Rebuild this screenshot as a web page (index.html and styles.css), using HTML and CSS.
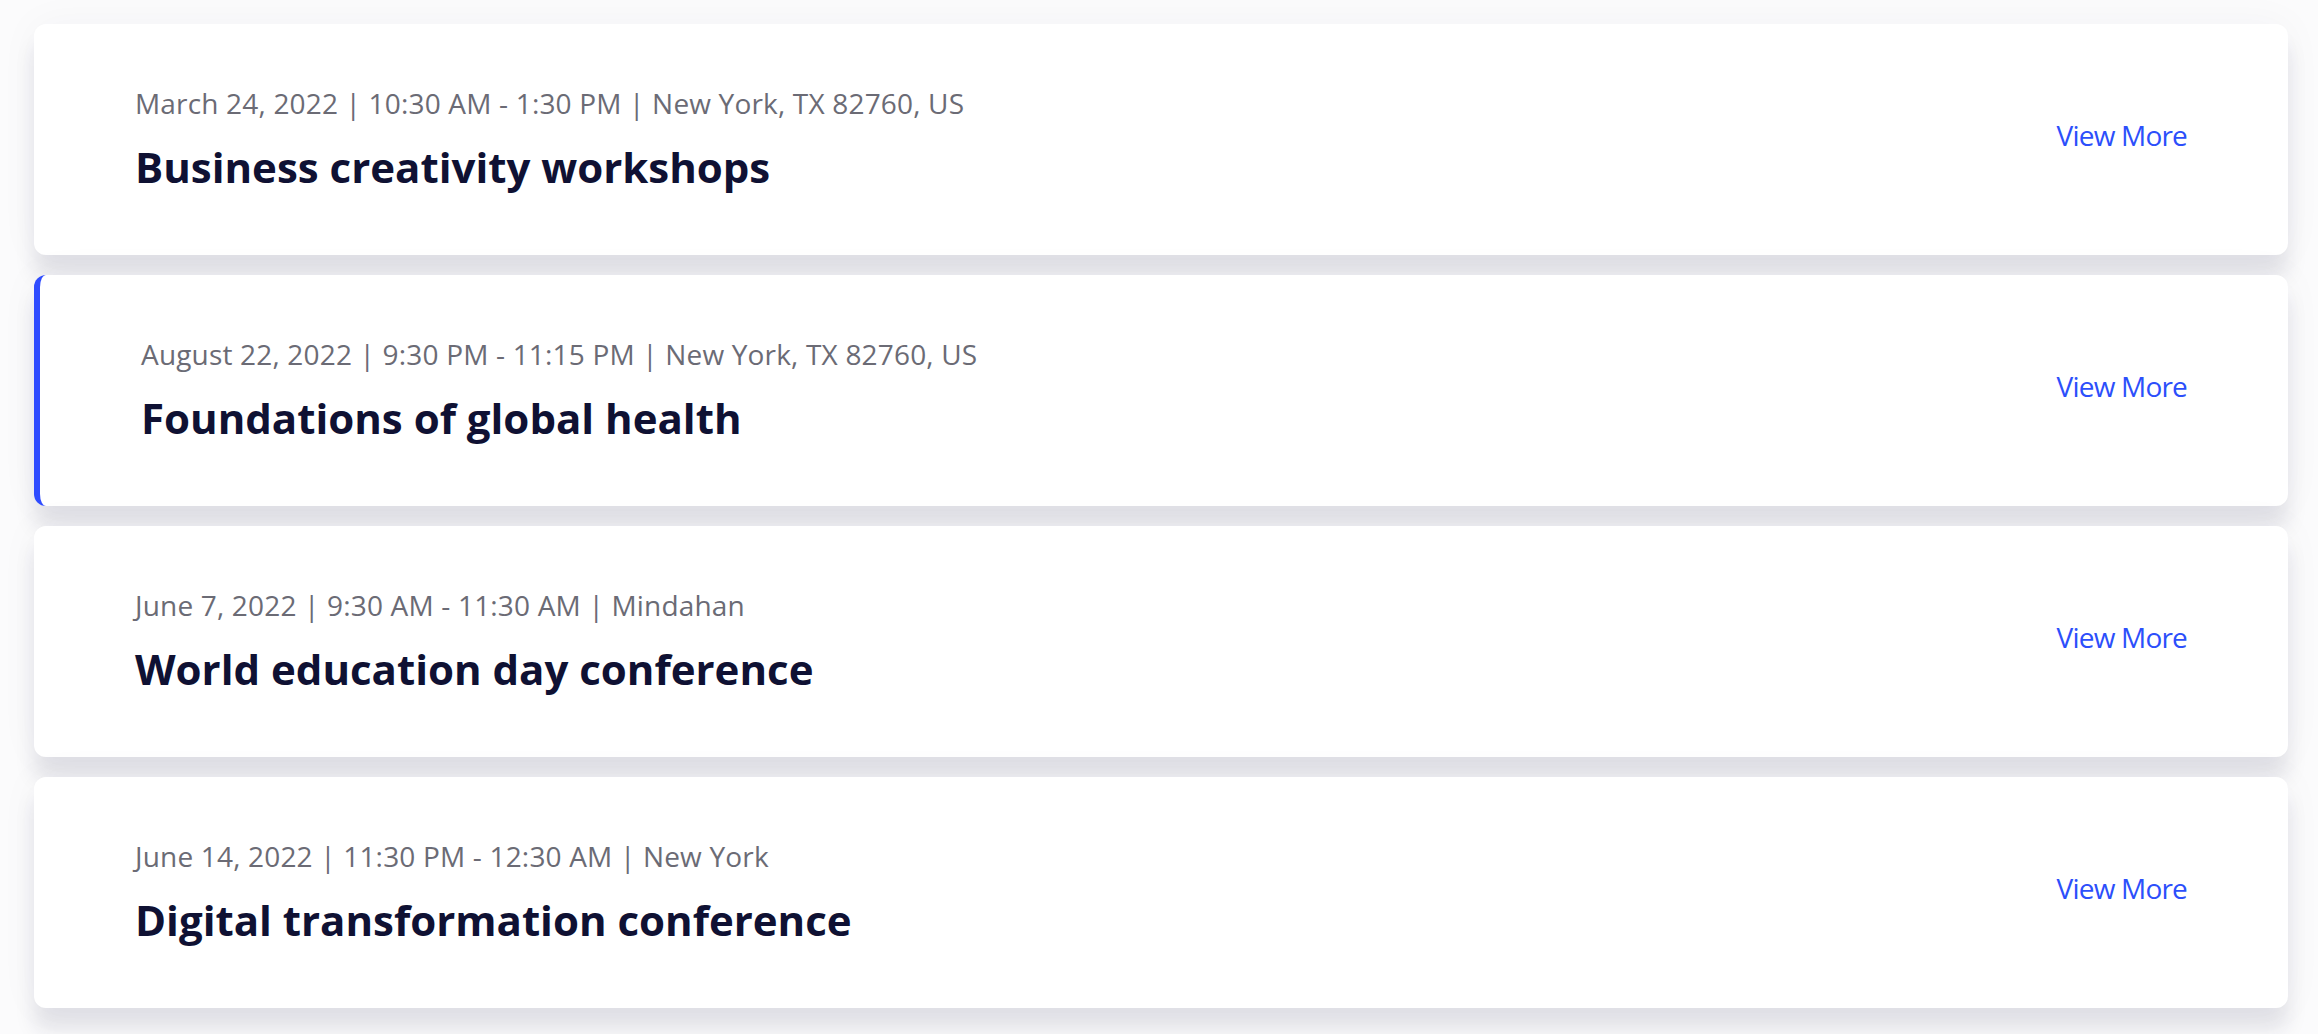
FILE: index.html
```html
<!DOCTYPE html>
<html lang="en">
<head>
<meta charset="utf-8">
<title>Events</title>
<link rel="stylesheet" href="styles.css">
</head>
<body>
<main class="events">
  <article class="event">
    <div class="event-info">
      <p class="event-meta">March 24, 2022 | 10:30 AM - 1:30 PM | New York, TX 82760, US</p>
      <h2 class="event-title">Business creativity workshops</h2>
    </div>
    <a class="event-link" href="#">View More</a>
  </article>
  <article class="event event--active">
    <div class="event-info">
      <p class="event-meta">August 22, 2022 | 9:30 PM - 11:15 PM | New York, TX 82760, US</p>
      <h2 class="event-title">Foundations of global health</h2>
    </div>
    <a class="event-link" href="#">View More</a>
  </article>
  <article class="event">
    <div class="event-info">
      <p class="event-meta">June 7, 2022 | 9:30 AM - 11:30 AM | Mindahan</p>
      <h2 class="event-title">World education day conference</h2>
    </div>
    <a class="event-link" href="#">View More</a>
  </article>
  <article class="event">
    <div class="event-info">
      <p class="event-meta">June 14, 2022 | 11:30 PM - 12:30 AM | New York</p>
      <h2 class="event-title">Digital transformation conference</h2>
    </div>
    <a class="event-link" href="#">View More</a>
  </article>
</main>
</body>
</html>
```

FILE: styles.css
```css
html, body {
  margin: 0;
  padding: 0;
}

body {
  background: #fbfbfc;
  font-family: "Open Sans", "Noto Sans", "Liberation Sans", sans-serif;
  height: 1034px;
  overflow: hidden;
}

.events {
  display: flex;
  flex-direction: column;
  gap: 20px;
  padding: 24px 30px 0 34px;
}

.event {
  display: flex;
  align-items: center;
  justify-content: space-between;
  background: #ffffff;
  border-radius: 12px;
  padding: 59px 101px 62px 101px;
  box-shadow: 0 22px 20px rgba(30, 30, 70, 0.1), 0 0 40px rgba(30, 30, 70, 0.04);
}

.event--active {
  border-left: 6px solid #2f4cff;
  padding-left: 101px;
}

.event-info {
  display: flex;
  flex-direction: column;
  gap: 18px;
}

.event-meta {
  margin: 0;
  font-size: 28px;
  line-height: 40px;
  color: #6b6b75;
  font-weight: 400;
  letter-spacing: 0.18px;
}

.event-title {
  margin: 0;
  font-size: 42px;
  line-height: 52px;
  color: #0f1133;
  font-weight: 700;
}

.event-link {
  font-size: 28px;
  line-height: 40px;
  color: #2c4ffb;
  text-decoration: none;
  font-weight: 400;
  letter-spacing: -0.8px;
  margin-bottom: 6px;
}
```
